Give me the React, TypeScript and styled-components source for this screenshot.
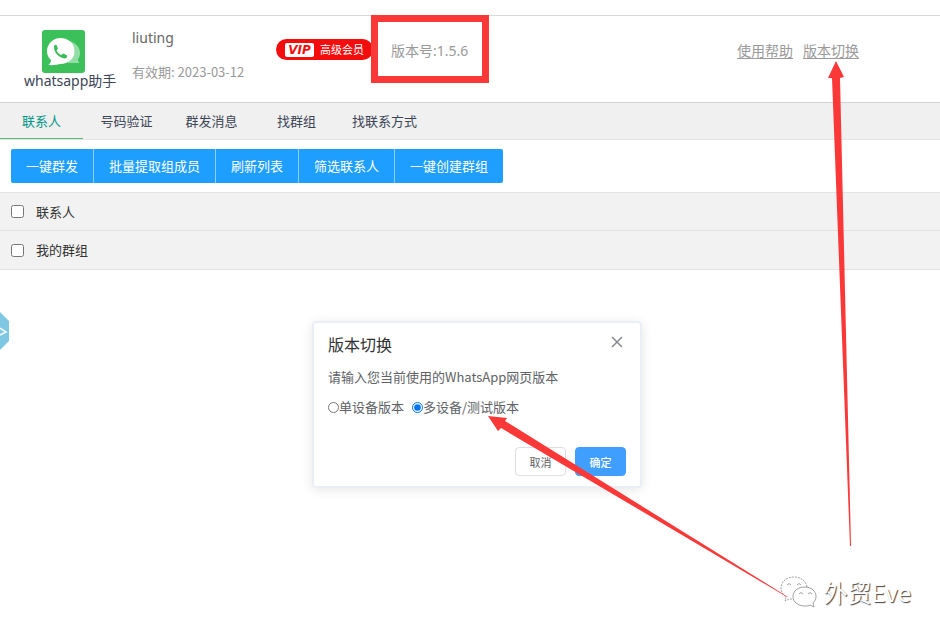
import React, { useState } from "react";
import styled, { createGlobalStyle } from "styled-components";

const GlobalStyle = createGlobalStyle`
  *, *::before, *::after { box-sizing: border-box; }
  body {
    margin: 0;
    background: #fff;
    color: #333;
    font: 13px/20px "Noto Sans", "Noto Sans CJK SC", sans-serif;
  }
  button, input { font: inherit; margin: 0; }
  p, h1, h2 { margin: 0; font-weight: 400; }
`;

const Page = styled.div`
  position: relative;
  min-height: 100vh;
  padding-top: 15px;
  overflow: hidden;
`;

const Header = styled.header`
  display: flex;
  align-items: flex-start;
  height: 88px;
  padding: 0 81px 0 24px;
  border-top: 1px solid #d8d8d8;
  border-bottom: 1px solid #d2d2d2;
  font-size: 14px;
`;

const Brand = styled.div`
  display: flex;
  flex-direction: column;
  width: 90px;
  margin-right: 18px;
  padding-top: 14px;
  color: #3c4556;
  white-space: nowrap;
  svg { margin-left: 18px; }
`;

const BrandName = styled.h1`
  font-size: 14px;
  line-height: 16px;
`;

const Account = styled.div`
  display: flex;
  flex-direction: column;
  gap: 14px;
  width: 144px;
  padding-top: 12px;
  color: #666;
  white-space: nowrap;
`;

const Expiry = styled.p`
  font-family: "Noto Sans CJK SC", sans-serif;
  font-size: 13px;
  color: #999;
`;

const VipBadge = styled.div`
  display: flex;
  align-items: center;
  gap: 6px;
  width: 97px;
  height: 21px;
  margin-top: 23px;
  padding-left: 9px;
  border-radius: 11px;
  background: #f30d0d;
  color: #fff;
  font-size: 11px;
  white-space: nowrap;
`;

const VipMark = styled.span`
  width: 29px;
  height: 14px;
  border-radius: 2px;
  background: #fff;
  color: #f30d0d;
  font: italic 700 12px/14px "DejaVu Sans", sans-serif;
  text-align: center;
`;

const Version = styled.div`
  width: 118px;
  height: 68px;
  margin: -1px 0 0 -2px;
  padding: 19px 13px;
  border: 7px solid #fb3838;
  color: #999;
  white-space: nowrap;
`;

const HeaderLinks = styled.nav`
  display: flex;
  gap: 10px;
  margin-left: auto;
  padding-top: 25px;
`;

const HeaderLink = styled.a`
  color: #999;
  text-decoration: underline;
  text-underline-offset: 2px;
  white-space: nowrap;
`;

const Tabs = styled.nav`
  display: flex;
  gap: 2px;
  height: 37px;
  background: #f0f0f0;
  border-bottom: 1px solid #e4e4e4;
`;

const Tab = styled.button<{ $active: boolean }>`
  min-width: 83px;
  height: 36px;
  padding: 0 12px;
  border: 0;
  border-bottom: 1px solid ${(p) => (p.$active ? "#5fb878" : "transparent")};
  background: none;
  color: ${(p) => (p.$active ? "#009688" : "#3c4556")};
`;

const Toolbar = styled.div`
  display: flex;
  padding: 9px 11px;
`;

const ToolButton = styled.button`
  height: 34px;
  padding: 0 15px;
  border: 0;
  background: #1e9fff;
  color: #fff;
  & + & { border-left: 1px solid #8ecfff; }
  &:first-child { border-radius: 2px 0 0 2px; }
  &:last-child { border-radius: 0 2px 2px 0; }
`;

const Groups = styled.section`
  border-top: 1px solid #e4e4e4;
`;

const GroupRow = styled.label`
  display: flex;
  align-items: center;
  gap: 12px;
  height: 38px;
  padding: 0 11px;
  border-bottom: 1px solid #e2e2e2;
  background: #f2f2f2;
  &:last-child { height: 39px; }
`;

const CheckBox = styled.input`
  width: 13px;
  height: 13px;
`;

const DrawerHandle = styled.button`
  position: absolute;
  left: 0;
  top: 312px;
  width: 10px;
  height: 38px;
  padding: 0;
  border: 0;
  background: none;
  svg { display: block; }
`;

const Dialog = styled.section`
  position: absolute;
  left: calc(50% - 158px);
  top: 321px;
  width: 330px;
  padding: 11px 14px 10px;
  border: 2px solid #ebeef5;
  border-radius: 4px;
  background: #fff;
  box-shadow: 0 2px 12px rgba(0, 0, 0, 0.1);
  color: #606266;
  font-family: "Noto Sans CJK SC", sans-serif;
`;

const DialogHead = styled.div`
  display: flex;
  justify-content: space-between;
  align-items: flex-start;
  height: 33px;
`;

const DialogTitle = styled.h2`
  font-size: 16px;
  line-height: 20px;
  color: #303133;
`;

const CloseButton = styled.button`
  width: 18px;
  height: 16px;
  padding: 0;
  border: 0;
  background: none;
  svg { display: block; margin: auto; }
`;

const Options = styled.div`
  display: flex;
  gap: 8px;
  margin: 10px 0 30px;
`;

const Option = styled.label`
  display: flex;
  align-items: center;
  white-space: nowrap;
`;

const Radio = styled.input`
  width: 11px;
  height: 11px;
`;

const DialogActions = styled.div`
  display: flex;
  justify-content: flex-end;
  gap: 9px;
`;

const ActionButton = styled.button<{ $primary?: boolean }>`
  width: 51px;
  height: 29px;
  padding: 0;
  border: 1px solid ${(p) => (p.$primary ? "#409eff" : "#dcdfe6")};
  border-radius: 4px;
  background: ${(p) => (p.$primary ? "#409eff" : "#fff")};
  color: ${(p) => (p.$primary ? "#fff" : "#606266")};
  font-size: 11px;
  font-weight: ${(p) => (p.$primary ? 500 : 400)};
`;

const Annotations = styled.svg`
  position: absolute;
  left: 0;
  top: 0;
  pointer-events: none;
`;

const Watermark = styled.div`
  position: absolute;
  right: 29px;
  top: 576px;
  display: flex;
  align-items: center;
  gap: 6px;
  color: #fff;
  font: 24px/32px "Noto Sans CJK SC", sans-serif;
  text-shadow: 1px 1px 1px #444;
  white-space: nowrap;
`;

const LogoIcon = () => (
  <svg width="43" height="43" viewBox="0 0 43 43" aria-hidden="true">
    <rect width="43" height="43" rx="3" fill="#3cc05a" />
    <path d="M27 11c6 1 11 6 11 12 0 3-1 5-2 6 0 2 .500 3 1.500 4H26z" fill="#94dda4" />
    <path d="M18.500 8C11 8 5 14 5 21c0 4 1.500 7 4 9 0 2-1 3.500-2.500 5 6 .500 9-.500 12-1 8 0 14-5.500 14-13S26.500 8 18.500 8z" fill="#fff" />
    <path d="M12 17c0 6 5 10.500 11 11.500 1.500-.500 2.500-1.500 2-3l-3.500-2-2.500 1.500c-2-1-3.500-2.500-4.500-4.500l1.500-2-1.500-3.500c-1.500-.500-2.500.500-2.500 2z" fill="#37bd55" />
  </svg>
);

const WechatIcon = () => (
  <svg width="37" height="32" viewBox="0 0 37 32" fill="#fff" stroke="#888" strokeWidth=".8" aria-hidden="true">
    <path fill="none" strokeDasharray="2 1" d="M27 11C26 5 21 1 14 1C6.500 1 1 5.500 1 12c0 4 2 7 5 9l-1 4 4-2h5" />
    <path d="M25 11c-7 0-12 4-12 9.500S18 30 25 30c2 0 4 0 5-1l4 2-1-4c2-2 3-4 3-6.500C36 15 31 11 25 11z" />
    <path fill="none" d="M7 9q2-3 4 0M17 9q2-3 4 0M19 18q2-3 4 0M28 18q2-3 4 0" />
  </svg>
);

const tabs = ["联系人", "号码验证", "群发消息", "找群组", "找联系方式"];
const tools = ["一键群发", "批量提取组成员", "刷新列表", "筛选联系人", "一键创建群组"];
const groups = ["联系人", "我的群组"];
const editions = ["单设备版本", "多设备/测试版本"];

export default function App() {
  const [tab, setTab] = useState(tabs[0]);
  const [edition, setEdition] = useState(editions[1]);

  return (
    <>
      <GlobalStyle />
      <Page>
        <Header>
          <Brand>
            <LogoIcon />
            <BrandName>whatsapp助手</BrandName>
          </Brand>
          <Account>
            <p>liuting</p>
            <Expiry>有效期: 2023-03-12</Expiry>
          </Account>
          <VipBadge>
            <VipMark>VIP</VipMark>高级会员
          </VipBadge>
          <Version>版本号:1.5.6</Version>
          <HeaderLinks>
            <HeaderLink href="#help">使用帮助</HeaderLink>
            <HeaderLink href="#version">版本切换</HeaderLink>
          </HeaderLinks>
        </Header>
        <Tabs>
          {tabs.map((name) => (
            <Tab key={name} $active={name === tab} onClick={() => setTab(name)}>{name}</Tab>
          ))}
        </Tabs>
        <Toolbar>
          {tools.map((name) => <ToolButton key={name}>{name}</ToolButton>)}
        </Toolbar>
        <Groups>
          {groups.map((name) => (
            <GroupRow key={name}>
              <CheckBox type="checkbox" />{name}
            </GroupRow>
          ))}
        </Groups>

        <DrawerHandle aria-label="展开">
          <svg width="10" height="38" viewBox="0 0 10 38">
            <path d="M0 0l9 9v20l-9 9z" fill="#7ec8e3" />
            <path d="M0 16l6 4-6 3" fill="none" stroke="#fff" strokeWidth="1.500" />
          </svg>
        </DrawerHandle>

        <Dialog role="dialog" aria-labelledby="dialog-title">
          <DialogHead>
            <DialogTitle id="dialog-title">版本切换</DialogTitle>
            <CloseButton aria-label="关闭">
              <svg width="12" height="12" viewBox="0 0 12 12">
                <path d="M1 1l10 10M11 1L1 11" stroke="#85888e" strokeWidth="1.500" />
              </svg>
            </CloseButton>
          </DialogHead>
          <p>请输入您当前使用的WhatsApp网页版本</p>
          <Options>
            {editions.map((name) => (
              <Option key={name}>
                <Radio type="radio" name="edition" checked={name === edition} onChange={() => setEdition(name)} />
                {name}
              </Option>
            ))}
          </Options>
          <DialogActions>
            <ActionButton>取消</ActionButton>
            <ActionButton $primary>确定</ActionButton>
          </DialogActions>
        </Dialog>

        <Watermark>
          <WechatIcon />
          <span>外贸Eve</span>
        </Watermark>
        <Annotations width="940" height="634" viewBox="0 0 940 634" fill="#fb3838" aria-hidden="true">
          <path d="M836 61L844 77L840 78L851 546H850L832 78L828 78z" />
          <path d="M488 416L507 418L505 421L788 597L787 597L501 428L498 431z" />
        </Annotations>
      </Page>
    </>
  );
}
